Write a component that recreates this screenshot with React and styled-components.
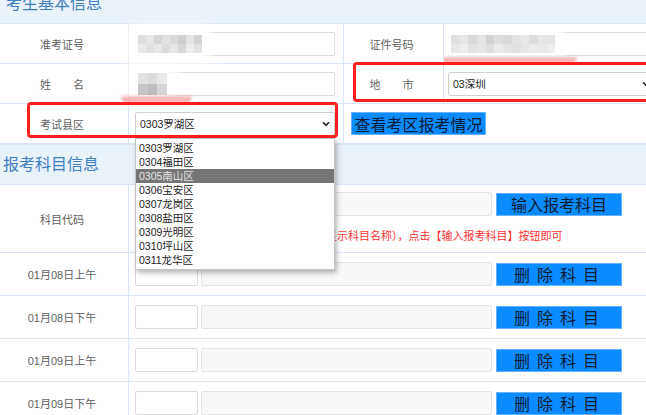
import React from 'react';
import styled, { createGlobalStyle } from 'styled-components';

const colors = {
  line: '#d9e6f5',
  headerBg: '#e9f1f9',
  headerText: '#3f80c2',
  label: '#5f5f5f',
  text: '#222222',
  red: '#ff1f1f',
  button: '#0a8bff',
  buttonBorder: '#62b0ff',
  buttonText: '#0d1c36',
};

const font = '"Liberation Sans", "Noto Sans CJK SC", sans-serif';

const GlobalStyle = createGlobalStyle`
  html, body {
    margin: 0;
    padding: 0;
    background: #ffffff;
    overflow: hidden;
  }
  body {
    font-family: ${font};
  }
`;

const Page = styled.div`
  width: 646px;
  margin-top: -16px;
  font-family: ${font};
`;

const SectionHeader = styled.div`
  height: ${(p) => (p.topLine ? 41 : 40)}px;
  line-height: 40px;
  padding-left: ${(p) => p.indent || 3}px;
  background: ${colors.headerBg};
  border-top: ${(p) => (p.topLine ? `1px solid ${colors.line}` : 'none')};
  border-bottom: 1px solid ${colors.line};
  color: ${colors.headerText};
  font-size: 16px;
  box-sizing: border-box;
`;

const InfoRow = styled.div`
  position: relative;
  display: grid;
  grid-template-columns: 129px 215px 100px 1fr;
  height: 40px;
  border-bottom: 1px solid ${colors.line};
  box-sizing: border-box;
`;

const Cell = styled.div`
  display: flex;
  align-items: center;
  justify-content: ${(p) => (p.label ? 'center' : 'flex-start')};
  padding-left: ${(p) => p.pad || 0}px;
  padding-right: ${(p) => (p.label ? 4 : 0)}px;
  grid-column: ${(p) => p.span || 'auto'};
  border-right: ${(p) => (p.last ? 'none' : `1px solid ${colors.line}`)};
  overflow: ${(p) => (p.clip ? 'hidden' : 'visible')};
  min-width: 0;
  box-sizing: border-box;
`;

const Label = styled.span`
  display: flex;
  justify-content: space-between;
  width: ${(p) => (p.spread ? '44px' : 'auto')};
  font-size: 11px;
  color: ${colors.label};
  white-space: nowrap;
`;

const TextBox = styled.div`
  position: relative;
  display: flex;
  align-items: center;
  flex-shrink: 0;
  width: ${(p) => p.width}px;
  height: 24px;
  border: 1px solid ${(p) => (p.muted ? '#e4e4e4' : '#dcdcdc')};
  border-radius: 2px;
  background: ${(p) => (p.muted ? '#f8f8f8' : '#ffffff')};
  box-sizing: border-box;
  font-size: 10.5px;
  color: ${colors.text};
  padding-left: ${(p) => p.inset || 0}px;
`;

const SelectWrap = styled.div`
  position: relative;
  flex-shrink: 0;
`;

const SelectBox = styled(TextBox)`
  justify-content: space-between;
  padding: 0 4px 0 4px;
  border-color: #cfcfcf;
  font-size: 10.5px;
`;

const Chevron = () => (
  <svg width="8" height="6" viewBox="0 0 8 6">
    <path d="M1 1.2 L4 4.3 L7 1.2" fill="none" stroke="#222" strokeWidth="1.6" />
  </svg>
);

const Dropdown = styled.div`
  position: absolute;
  left: 0;
  top: calc(100% + 2px);
  width: 200px;
  padding: 2px 0 2px;
  background: #ffffff;
  border: 1px solid #c4c4c4;
  box-shadow: 2px 3px 5px rgba(0, 0, 0, 0.28);
  box-sizing: border-box;
  z-index: 5;
`;

const Option = styled.div`
  height: 14px;
  line-height: 14px;
  padding-left: 3px;
  font-size: 10.5px;
  color: ${(p) => (p.active ? '#e6e6e6' : colors.text)};
  background: ${(p) => (p.active ? '#757575' : 'transparent')};
`;

const BlueButton = styled.div`
  display: flex;
  align-items: center;
  justify-content: center;
  flex-shrink: 0;
  width: ${(p) => p.width}px;
  height: 23px;
  margin-left: ${(p) => p.gapLeft || 0}px;
  padding-left: ${(p) => p.shift || 0}px;
  background: ${colors.button};
  border: 1px solid ${colors.buttonBorder};
  box-sizing: border-box;
  color: ${colors.buttonText};
  font-size: 16px;
  letter-spacing: ${(p) => p.spacing || 0}px;
  white-space: nowrap;
`;

const Annotation = styled.div`
  position: absolute;
  left: ${(p) => p.left}px;
  top: ${(p) => p.top}px;
  width: ${(p) => p.width}px;
  height: ${(p) => p.height}px;
  border: 3px solid ${colors.red};
  border-radius: 4px;
  box-sizing: border-box;
  pointer-events: none;
  z-index: 3;
`;

const MosaicGrid = styled.div`
  position: relative;
  display: grid;
  grid-template-columns: repeat(${(p) => p.cols}, ${(p) => p.tile}px);
  grid-auto-rows: ${(p) => p.tileH}px;
  box-shadow: 0 0 9px 10px rgba(255, 255, 255, 0.96);
  background: rgba(255, 255, 255, 0.96);
  z-index: 2;

  &::after {
    content: '';
    display: ${(p) => (p.smear ? 'block' : 'none')};
    position: absolute;
    left: ${(p) => p.smearLeft || -10}px;
    right: ${(p) => p.smearRight || -10}px;
    top: calc(100% + ${(p) => p.smearGap || 0}px);
    height: 8px;
    border-radius: 0 0 40px 40px;
    background: rgba(255, 110, 110, 0.5);
    filter: blur(1.5px);
  }
`;

const Tile = styled.span`
  background: ${(p) => p.shade};
`;

const Mosaic = ({ shades, cols, tile, tileH, ...rest }) => (
  <MosaicGrid cols={cols} tile={tile} tileH={tileH} {...rest}>
    {shades.map((s, i) => (
      <Tile key={i} shade={s} />
    ))}
  </MosaicGrid>
);

const SubjectRow = styled.div`
  display: grid;
  grid-template-columns: 129px 1fr;
  height: ${(p) => p.height}px;
  border-bottom: 1px solid ${colors.line};
  box-sizing: border-box;
`;

const SubjectLabel = styled.div`
  display: flex;
  align-items: center;
  justify-content: center;
  padding-right: 4px;
  border-right: 1px solid ${colors.line};
  font-size: 11px;
  color: ${colors.label};
`;

const SubjectBody = styled.div`
  display: flex;
  flex-direction: column;
  justify-content: ${(p) => (p.top ? 'flex-start' : 'center')};
  padding: ${(p) => (p.top ? '7px 0 0 6px' : '0 0 0 6px')};
  box-sizing: border-box;
`;

const InputLine = styled.div`
  display: flex;
  align-items: center;
  gap: 3px;
`;

const Hint = styled.div`
  margin-top: 11px;
  margin-left: 4px;
  font-size: 11px;
  color: #ff3333;
  white-space: nowrap;
`;

const districts = [
  '0303罗湖区',
  '0304福田区',
  '0305南山区',
  '0306宝安区',
  '0307龙岗区',
  '0308盐田区',
  '0309光明区',
  '0310坪山区',
  '0311龙华区',
];

const examSlots = ['01月08日上午', '01月08日下午', '01月09日上午', '01月09日下午'];

const idShades = ['#dedede', '#e6e6e6', '#d6d6d6', '#e2e2e2', '#d9d9d9', '#cfcfcf', '#e4e4e4', '#d3d3d3',
  '#eaeaea', '#e0e0e0', '#e8e8e8', '#dcdcdc', '#e6e6e6', '#d8d8d8', '#ececec', '#e2e2e2'];
const nameShades = ['#e2e2e2', '#dcdcdc', '#e9e9e9', '#c6c6c6', '#bdbdbd', '#d6d6d6'];
const certShades = ['#e0e0e0', '#e6e6e6', '#dadada', '#e4e4e4', '#d2d2d2', '#dedede', '#d9d9d9', '#e2e2e2', '#e8e8e8', '#dcdcdc', '#e6e6e6', '#e4e4e4',
  '#e8e8e8', '#ececec', '#e2e2e2', '#e6e6e6', '#dedede', '#eaeaea', '#e4e4e4', '#e0e0e0', '#e6e6e6', '#ebebeb', '#e8e8e8', '#eeeeee'];

const App = () => (
  <Page>
    <GlobalStyle />
    <SectionHeader indent={6}>考生基本信息</SectionHeader>

    <InfoRow>
      <Cell label>
        <Label>准考证号</Label>
      </Cell>
      <Cell pad={6}>
        <TextBox width={200} inset={2}>
          <Mosaic shades={idShades} cols={8} tile={8} tileH={9} />
        </TextBox>
      </Cell>
      <Cell label>
        <Label>证件号码</Label>
      </Cell>
      <Cell last clip pad={4}>
        <TextBox width={220} inset={2}>
          <Mosaic
            shades={certShades}
            cols={12}
            tile={8.7}
            tileH={9}
            smear
            smearGap={4}
            smearLeft={-10}
            smearRight={-22}
          />
        </TextBox>
      </Cell>
    </InfoRow>

    <InfoRow>
      <Cell label>
        <Label spread>
          <span>姓</span>
          <span>名</span>
        </Label>
      </Cell>
      <Cell pad={6}>
        <TextBox width={200} inset={2}>
          <Mosaic shades={nameShades} cols={3} tile={9.5} tileH={11} smear smearGap={1} smearLeft={-17} smearRight={-25} />
        </TextBox>
      </Cell>
      <Cell label>
        <Label spread>
          <span>地</span>
          <span>市</span>
        </Label>
      </Cell>
      <Cell last clip pad={4}>
        <SelectBox width={207}>
          <span>03深圳</span>
          <Chevron />
        </SelectBox>
      </Cell>
      <Annotation left={353} top={-2} width={300} height={40} />
    </InfoRow>

    <InfoRow>
      <Cell label>
        <Label>考试县区</Label>
      </Cell>
      <Cell pad={6}>
        <SelectWrap>
          <SelectBox width={200}>
            <span>0303罗湖区</span>
            <Chevron />
          </SelectBox>
          <Dropdown>
            {districts.map((d) => (
              <Option key={d} active={d === '0305南山区'}>
                {d}
              </Option>
            ))}
          </Dropdown>
        </SelectWrap>
      </Cell>
      <Cell last span="3 / 5" pad={7}>
        <BlueButton width={135}>查看考区报考情况</BlueButton>
      </Cell>
      <Annotation left={27} top={-2} width={311} height={36} />
    </InfoRow>

    <SectionHeader topLine>报考科目信息</SectionHeader>

    <SubjectRow height={68}>
      <SubjectLabel>科目代码</SubjectLabel>
      <SubjectBody top>
        <InputLine>
          <TextBox width={63} />
          <TextBox width={291} muted />
          <BlueButton width={126} gapLeft={1}>
            输入报考科目
          </BlueButton>
        </InputLine>
        <Hint>在左边框输入科目代码后（右边框自动显示科目名称），点击【输入报考科目】按钮即可</Hint>
      </SubjectBody>
    </SubjectRow>

    {examSlots.map((slot) => (
      <SubjectRow key={slot} height={43}>
        <SubjectLabel>{slot}</SubjectLabel>
        <SubjectBody>
          <InputLine>
            <TextBox width={63} />
            <TextBox width={291} muted />
            <BlueButton width={126} spacing={7} shift={2} gapLeft={1}>
              删除科目
            </BlueButton>
          </InputLine>
        </SubjectBody>
      </SubjectRow>
    ))}
  </Page>
);

export default App;
